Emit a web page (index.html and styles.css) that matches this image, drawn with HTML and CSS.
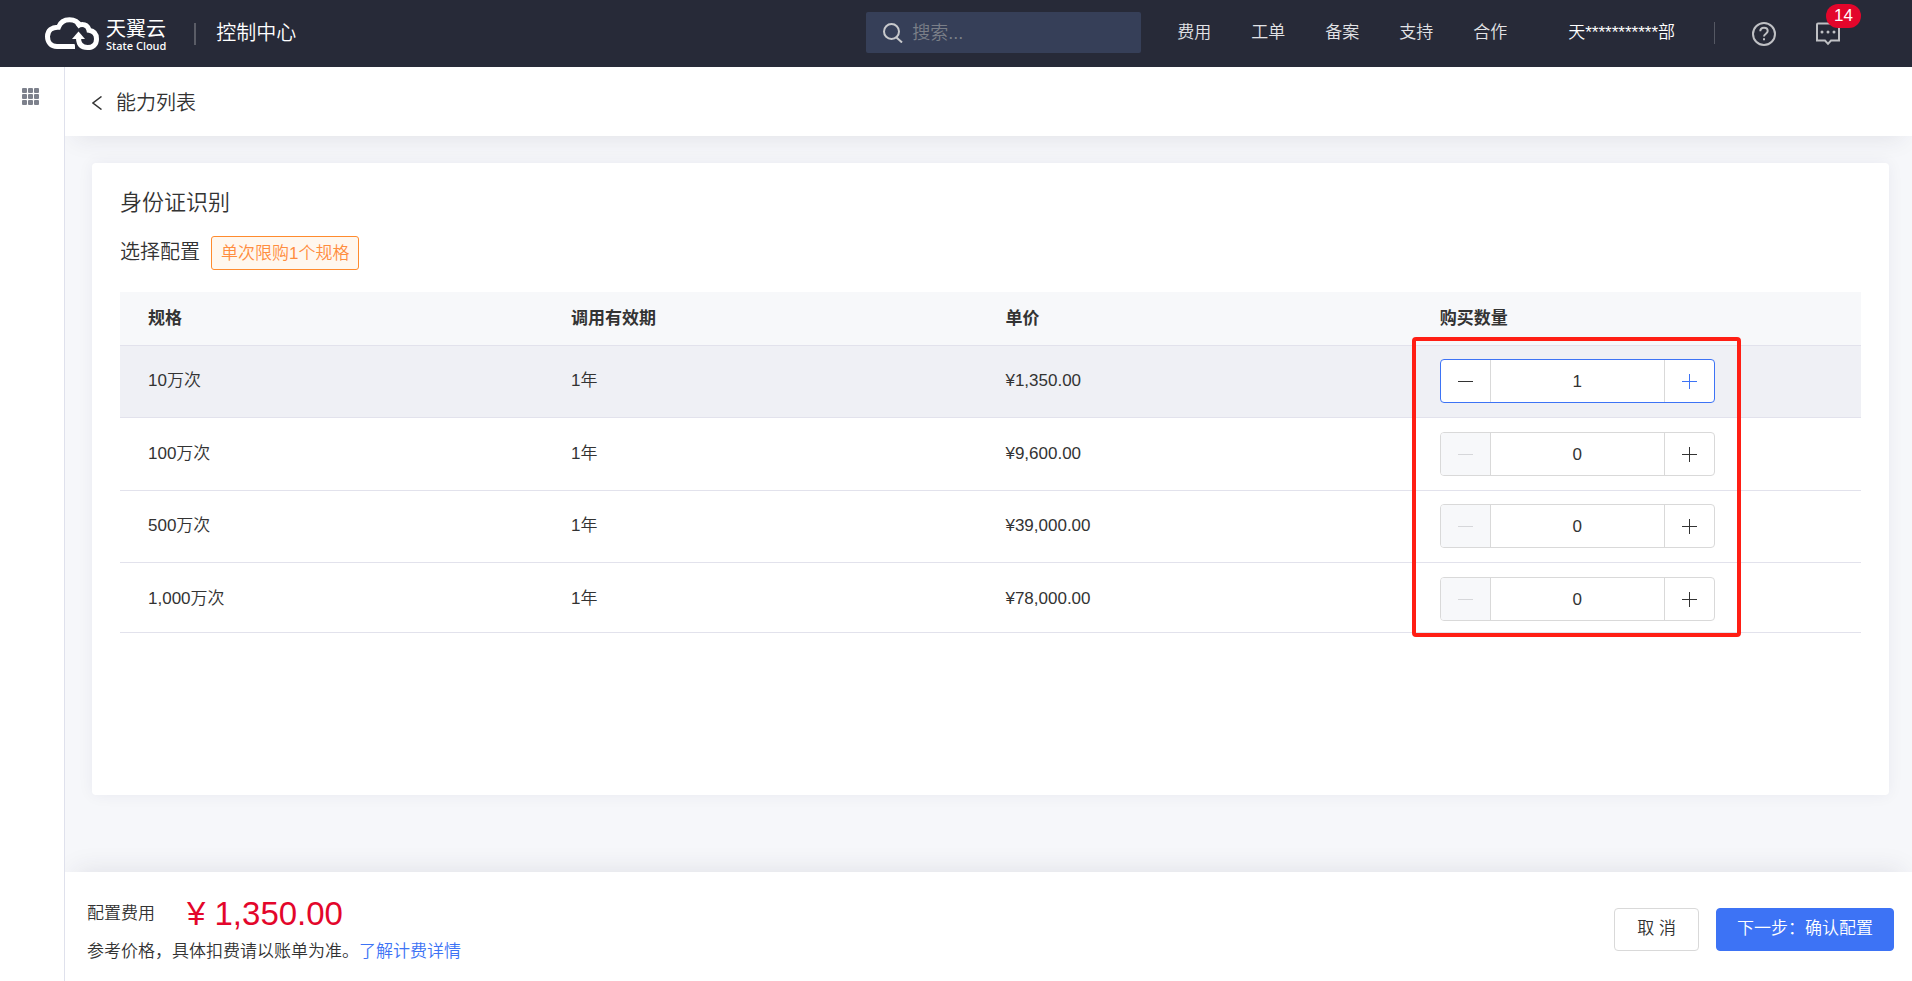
FILE: index.html
```html
<!DOCTYPE html>
<html lang="zh-CN">
<head>
<meta charset="utf-8">
<title>控制中心 - 身份证识别</title>
<link rel="stylesheet" href="styles.css">
</head>
<body>
<header class="topbar">
  <a class="logo" href="#">
    <svg class="logo-mark" viewBox="0 0 56 34" width="56" height="34" aria-hidden="true">
      <path d="M31 29.500H13C7 29.500 3.500 25 3.500 19.500C3.500 13.500 8 9.800 14.500 10.200C16.500 5 20.500 2.800 25.500 2.800C30.500 2.800 34.500 5.500 36.500 9.500" fill="none" stroke="#fff" stroke-width="5"/>
      <path d="M33 9.500C38 5.500 44 8 45 13.200C50.500 14 52.500 17.500 52.500 22C52.500 27.500 49 30.500 43.500 30.500C38 30.500 34.500 27.500 34.500 21" fill="none" stroke="#fff" stroke-width="5"/>
      <path d="M28 22L34.500 14.500L41 22Z" fill="#fff"/>
      <path d="M31 23C31 27 32 30 35 33.500" stroke="#272a38" stroke-width="2" fill="none"/>
    </svg>
    <span class="logo-text"><span class="logo-cn">天翼云</span><span class="logo-en">State Cloud</span></span>
  </a>
  <span class="logo-divider"></span>
  <a class="console" href="#">控制中心</a>
  <label class="search">
    <svg viewBox="0 0 20 20" width="20" height="20" aria-hidden="true"><circle cx="8.500" cy="8.500" r="7.500"/><path d="M13.500 14.500L19 19.500"/></svg>
    <input type="text" placeholder="搜索..." aria-label="搜索">
  </label>
  <nav class="nav">
    <a href="#">费用</a><a href="#">工单</a><a href="#">备案</a><a href="#">支持</a><a href="#">合作</a>
  </nav>
  <a class="user" href="#">天***********部</a>
  <span class="divider"></span>
  <button class="icon-btn help" type="button" aria-label="帮助">
    <svg viewBox="0 0 24 24" width="24" height="24"><circle cx="12" cy="12" r="11"/><path d="M8.300 9.300C8.300 7 9.800 5.800 12 5.800S15.700 7 15.700 9.100C15.700 11.700 12 11.700 12 14.600"/><path d="M12 16.300V18.300"/></svg>
  </button>
  <button class="icon-btn message" type="button" aria-label="消息">
    <svg viewBox="0 0 24 24" width="24" height="24"><path d="M2 1.500H22Q23 1.500 23 2.500V18.500H15L12 21.800L9 18.500H1V2.500Q1 1.500 2 1.500Z"/><g class="dots"><circle cx="6" cy="10" r="1.500"/><circle cx="12" cy="10" r="1.500"/><circle cx="18" cy="10" r="1.500"/></g></svg>
    <span class="badge">14</span>
  </button>
</header>

<div class="shell">
  <aside class="sidebar">
    <button class="apps" type="button" aria-label="全部服务">
      <i></i><i></i><i></i><i></i><i></i><i></i><i></i><i></i><i></i>
    </button>
  </aside>
  <div class="page">
    <div class="crumb">
      <a href="#"><svg viewBox="0 0 10 14" width="10" height="14" aria-hidden="true"><path d="M9.500 0.500L1 7L9.500 13.500"/></svg>能力列表</a>
    </div>
    <main class="content">
      <section class="card">
        <h1>身份证识别</h1>
        <div class="config"><span class="config-label">选择配置</span><span class="tag">单次限购1个规格</span></div>
        <div class="table-wrap">
          <table class="specs">
            <colgroup><col class="c1"><col class="c2"><col class="c3"><col></colgroup>
            <thead><tr><th>规格</th><th>调用有效期</th><th>单价</th><th>购买数量</th></tr></thead>
            <tbody>
              <tr class="selected"><td>10万次</td><td>1年</td><td>¥1,350.00</td><td><div class="stepper active"><button type="button" class="minus" aria-label="减少"></button><input type="text" value="1" aria-label="10万次购买数量"><button type="button" class="plus" aria-label="增加"></button></div></td></tr>
              <tr><td>100万次</td><td>1年</td><td>¥9,600.00</td><td><div class="stepper"><button type="button" class="minus" aria-label="减少" disabled></button><input type="text" value="0" aria-label="100万次购买数量"><button type="button" class="plus" aria-label="增加"></button></div></td></tr>
              <tr><td>500万次</td><td>1年</td><td>¥39,000.00</td><td><div class="stepper"><button type="button" class="minus" aria-label="减少" disabled></button><input type="text" value="0" aria-label="500万次购买数量"><button type="button" class="plus" aria-label="增加"></button></div></td></tr>
              <tr><td>1,000万次</td><td>1年</td><td>¥78,000.00</td><td><div class="stepper"><button type="button" class="minus" aria-label="减少" disabled></button><input type="text" value="0" aria-label="1,000万次购买数量"><button type="button" class="plus" aria-label="增加"></button></div></td></tr>
            </tbody>
          </table>
          <div class="highlight"></div>
        </div>
      </section>
    </main>
    <footer class="checkout">
      <div class="summary">
        <div class="fee"><span>配置费用</span><strong>¥ 1,350.00</strong></div>
        <p>参考价格，具体扣费请以账单为准。<a href="#">了解计费详情</a></p>
      </div>
      <div class="actions">
        <button class="btn" type="button">取 消</button>
        <button class="btn primary" type="button">下一步：确认配置</button>
      </div>
    </footer>
  </div>
</div>
</body>
</html>
```
FILE: styles.css
```css
* { box-sizing: border-box; }

body {
  margin: 0;
  min-height: 100vh;
  display: flex;
  flex-direction: column;
  font: 350 17px/24px "Liberation Sans", "Noto Sans CJK SC", sans-serif;
  color: #333;
  background: #f6f7fa;
}

a { color: inherit; text-decoration: none; }
button, input { font: inherit; color: inherit; margin: 0; padding: 0; border: 0; background: none; }
svg { fill: none; display: block; }

/* top bar */
.topbar {
  display: flex;
  align-items: center;
  height: 67px;
  padding: 0 72px 0 44px;
  background: #272a38;
  color: #fff;
  flex: none;
  white-space: nowrap;
}
.logo { display: flex; align-items: center; gap: 6px; }
.logo-text { display: flex; flex-direction: column; padding-top: 2px; }
.logo-cn { font-size: 20px; line-height: 22px; font-weight: 400; }
.logo-en { font: 500 11px/12px "Noto Sans", sans-serif; }
.logo-divider { width: 2px; height: 22px; margin: 0 20px 0 28px; background: #5a5c66; }
.console { font-size: 20px; padding-bottom: 2px; }
.search {
  display: flex;
  align-items: center;
  gap: 9px;
  width: 275px;
  height: 41px;
  margin: 0 36px 2px auto;
  padding: 0 17px;
  border-radius: 2px;
  background: #363f58;
}
.search svg { stroke: #c8c9cc; stroke-width: 2; flex: none; }
.search input { flex: 1; min-width: 0; font-size: 18px; outline: 0; }
.search input::placeholder { color: #7b7f88; opacity: 1; }
.nav { display: flex; gap: 40px; color: #e2e3e6; padding-bottom: 2px; }
.user { margin-left: 61px; padding-bottom: 2px; }
.divider { width: 1px; height: 22px; margin: 0 37px 2px 39px; background: #555863; }
.icon-btn { position: relative; }
.icon-btn svg { stroke: #bfc0c4; stroke-width: 2; }
.message { margin-left: 40px; }
.dots { fill: #bfc0c4; stroke: none; }
.badge {
  position: absolute;
  left: 10px;
  top: -18px;
  width: 35px;
  height: 24px;
  border-radius: 12px;
  background: #e3062b;
  color: #fff;
}

/* shell */
.shell { display: flex; flex: 1; }
.sidebar {
  position: relative;
  z-index: 1;
  width: 65px;
  flex: none;
  padding: 21px 0 0 22px;
  background: #fff;
  border-right: 1px solid #dfe1ec;
}
.apps { display: grid; grid-template-columns: repeat(3, 5px); gap: 1px; }
.apps i { height: 5px; background: #7d818c; border-radius: 1px; }
.page { flex: 1; min-width: 0; display: flex; flex-direction: column; }
.crumb {
  display: flex;
  align-items: center;
  height: 69px;
  padding: 2px 27px 0;
  background: #fff;
  box-shadow: 0 12px 24px -10px rgba(40, 42, 70, .1);
  font-size: 20px;
}
.crumb a { display: flex; align-items: center; gap: 14px; }
.crumb svg { stroke: #333; stroke-width: 1.5; }

.content { flex: 1; padding: 27px 23px 77px 27px; display: flex; }
.card {
  flex: 1;
  padding: 25px 28px;
  border-radius: 4px;
  background: #fff;
  box-shadow: 0 0 16px rgba(40, 42, 90, .06);
}
h1 { margin: 0; font-size: 22px; line-height: 30px; font-weight: 350; }
.config { display: flex; align-items: center; gap: 11px; margin: 18px 0 22px; }
.config-label { font-size: 20px; padding-bottom: 3px; }
.tag {
  padding: 5px 9px 3px;
  border: 1px solid #ff8b2e;
  border-radius: 3px;
  background: #fff7ee;
  color: #ff8d3f;
}

/* table */
.table-wrap { position: relative; }
.specs { width: 100%; table-layout: fixed; border-collapse: separate; border-spacing: 0; }
.c1 { width: 24.3%; }
.c2, .c3 { width: 24.95%; }
th, td { text-align: left; padding: 0 28px; border-bottom: 1px solid #e2e2ec; }
th { height: 54px; background: #f7f8fa; font-weight: 700; }
td { padding: 14px 28px; }
tr:nth-child(odd) td { padding-top: 13px; }
tr:last-child td { padding-bottom: 11px; }
.selected td { background: #eff0f5; }

.stepper {
  display: flex;
  width: 275px;
  height: 44px;
  border: 1px solid #d9d9d9;
  border-radius: 4px;
  background: #fff;
  overflow: hidden;
}
.stepper.active { border-color: #3d73f5; }
.stepper input {
  flex: 1;
  min-width: 0;
  padding-top: 2px;
  text-align: center;
  border: solid #d9d9d9;
  border-width: 0 1px;
  outline: 0;
}
.minus, .plus {
  width: 49px;
  color: #333;
  background: linear-gradient(currentColor, currentColor) center / 15px 1px no-repeat;
}
.plus {
  background:
    linear-gradient(currentColor, currentColor) center / 15px 1px no-repeat,
    linear-gradient(currentColor, currentColor) center / 1px 15px no-repeat;
}
.minus:disabled { color: #d6d7da; background-color: #f7f8fa; }
.active .plus { color: #3d73f5; }

.highlight {
  position: absolute;
  top: 45px;
  bottom: -4px;
  left: 74.2%;
  width: 329px;
  border: 4px solid #ff1e14;
  border-radius: 4px;
  pointer-events: none;
}

/* checkout bar */
.checkout {
  display: flex;
  justify-content: space-between;
  align-items: center;
  padding: 22px 18px 17px 22px;
  background: #fff;
  box-shadow: 0 -12px 24px -10px rgba(40, 42, 70, .1);
}
.fee { display: flex; align-items: center; gap: 32px; height: 40px; }
.fee strong { font-size: 33px; line-height: 40px; font-weight: 350; color: #e3062b; }
.summary p { margin: 6px 0 0; }
.summary a { color: #3d73f5; }
.actions { display: flex; gap: 17px; }
.btn {
  height: 43px;
  padding: 0 22px;
  border: 1px solid #d9d9d9;
  border-radius: 4px;
  background: #fff;
}
.primary { padding: 0 20px; background: #3d73f5; border-color: #3d73f5; color: #fff; }
```
